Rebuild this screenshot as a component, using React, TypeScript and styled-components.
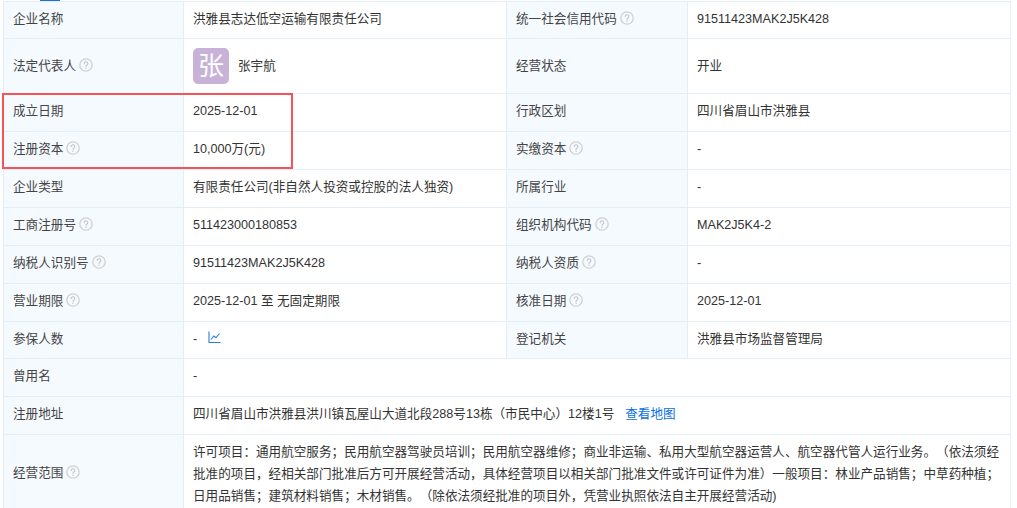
import React from "react";
import styled, { createGlobalStyle } from "styled-components";

const Global = createGlobalStyle`
  html, body { margin: 0; padding: 0; background: #fff; height: 508px; overflow: hidden; }
  body { font-family: "Liberation Sans", "Noto Sans CJK SC", sans-serif; }
`;
const Page = styled.div`
  position: relative;
  width: 1017px;
  height: 508px;
  overflow: hidden;
  padding: 1px 0 0 3px;
  box-sizing: border-box;
`;
const TopMark = styled.div`
  position: absolute;
  left: 40px;
  top: 0;
  width: 20px;
  height: 1px;
  background: #1f6fe0;
`;
const Table = styled.table`
  border-collapse: collapse;
  table-layout: fixed;
  width: 1007px;
  font-size: 12.6px;
  color: #333;
  line-height: 19px;
  text-spacing-trim: space-all;
`;
const Row = styled.tr<{ $h?: number }>`
  height: ${(p) => p.$h ?? 38}px;
`;
const Label = styled.td<{ $flush?: boolean }>`
  background: #f5faff;
  border: 1px solid #e4eef7;
  padding: 0 9px ${(p) => (p.$flush ? 0 : 2)}px;
  box-sizing: border-box;
  white-space: nowrap;
  color: #444;
`;
const Value = styled.td<{ $flush?: boolean }>`
  border: 1px solid #e4eef7;
  padding: 0 9px ${(p) => (p.$flush ? 0 : 2)}px;
  box-sizing: border-box;
  white-space: nowrap;
`;
const Scope = styled(Value)`
  white-space: normal;
  line-height: 22px;
  padding: 6px 8px 0 9px;
  vertical-align: top;
`;
const Help = styled.svg`
  display: inline-block;
  width: 14px;
  height: 14px;
  margin-left: 3px;
  vertical-align: -2px;
`;
const Person = styled.div`
  display: flex;
  align-items: center;
  gap: 9px;
`;
const Avatar = styled.div`
  width: 36px;
  height: 36px;
  border-radius: 5px;
  background: #c8b2d8;
  color: #fff;
  font-size: 26px;
  display: flex;
  align-items: center;
  justify-content: center;
  line-height: 1;
`;
const TrendIcon = styled.svg`
  display: inline-block;
  width: 13px;
  height: 13px;
  margin-left: 11px;
  vertical-align: -1px;
`;
const MapLink = styled.span`
  color: #0a6fe0;
  margin-left: 11px;
`;
const Highlight = styled.div`
  position: absolute;
  left: 2px;
  top: 93px;
  width: 291px;
  height: 76px;
  border: 2px solid #f5535a;
  box-sizing: border-box;
  pointer-events: none;
`;

const Q = () => (
  <Help viewBox="0 0 14 14" fill="none">
    <circle cx="7" cy="7" r="6.2" stroke="#d0d0d0" strokeWidth="1.3" />
    <path d="M5.2 5.6a1.8 1.8 0 1 1 2.7 1.5c-.6.4-.9.7-.9 1.4" stroke="#c4c4c4" strokeWidth="1.1" strokeLinecap="round" />
    <circle cx="7" cy="10.3" r=".7" fill="#c4c4c4" />
  </Help>
);

export default function App() {
  return (
    <Page>
      <Global />
      <TopMark />
      <Table>
        <colgroup>
          <col style={{ width: 180 }} />
          <col style={{ width: 323 }} />
          <col style={{ width: 181 }} />
          <col style={{ width: 323 }} />
        </colgroup>
        <tbody>
          <Row $h={37}>
            <Label>企业名称</Label>
            <Value>洪雅县志达低空运输有限责任公司</Value>
            <Label>统一社会信用代码<Q /></Label>
            <Value>91511423MAK2J5K428</Value>
          </Row>
          <Row $h={55}>
            <Label $flush>法定代表人<Q /></Label>
            <Value $flush>
              <Person>
                <Avatar>张</Avatar>
                <span>张宇航</span>
              </Person>
            </Value>
            <Label $flush>经营状态</Label>
            <Value $flush>开业</Value>
          </Row>
          <Row>
            <Label>成立日期</Label>
            <Value>2025-12-01</Value>
            <Label>行政区划</Label>
            <Value>四川省眉山市洪雅县</Value>
          </Row>
          <Row>
            <Label>注册资本<Q /></Label>
            <Value>10,000万(元)</Value>
            <Label>实缴资本<Q /></Label>
            <Value>-</Value>
          </Row>
          <Row>
            <Label>企业类型</Label>
            <Value>有限责任公司(非自然人投资或控股的法人独资)</Value>
            <Label>所属行业</Label>
            <Value>-</Value>
          </Row>
          <Row>
            <Label>工商注册号<Q /></Label>
            <Value>511423000180853</Value>
            <Label>组织机构代码<Q /></Label>
            <Value>MAK2J5K4-2</Value>
          </Row>
          <Row>
            <Label>纳税人识别号<Q /></Label>
            <Value>91511423MAK2J5K428</Value>
            <Label>纳税人资质<Q /></Label>
            <Value>-</Value>
          </Row>
          <Row>
            <Label>营业期限<Q /></Label>
            <Value>2025-12-01 至 无固定期限</Value>
            <Label>核准日期<Q /></Label>
            <Value>2025-12-01</Value>
          </Row>
          <Row $h={37}>
            <Label>参保人数</Label>
            <Value>
              -
              <TrendIcon viewBox="0 0 13 13" fill="none" stroke="#2f7be6" strokeWidth="1.1">
                <path d="M1 .5v11h11.5" />
                <path d="M3 8.5 5.8 5l2.2 1.8L11.5 2.5" />
              </TrendIcon>
            </Value>
            <Label>登记机关</Label>
            <Value>洪雅县市场监督管理局</Value>
          </Row>
          <Row>
            <Label>曾用名</Label>
            <Value colSpan={3}>-</Value>
          </Row>
          <Row>
            <Label>注册地址</Label>
            <Value colSpan={3}>
              四川省眉山市洪雅县洪川镇瓦屋山大道北段288号13栋（市民中心）12楼1号
              <MapLink>查看地图</MapLink>
            </Value>
          </Row>
          <Row $h={80}>
            <Label>经营范围<Q /></Label>
            <Scope colSpan={3}>
              许可项目：通用航空服务；民用航空器驾驶员培训；民用航空器维修；商业非运输、私用大型航空器运营人、航空器代管人运行业务。（依法须经批准的项目，经相关部门批准后方可开展经营活动，具体经营项目以相关部门批准文件或许可证件为准）一般项目：林业产品销售；中草药种植；日用品销售；建筑材料销售；木材销售。（除依法须经批准的项目外，凭营业执照依法自主开展经营活动)
            </Scope>
          </Row>
        </tbody>
      </Table>
      <Highlight />
    </Page>
  );
}
